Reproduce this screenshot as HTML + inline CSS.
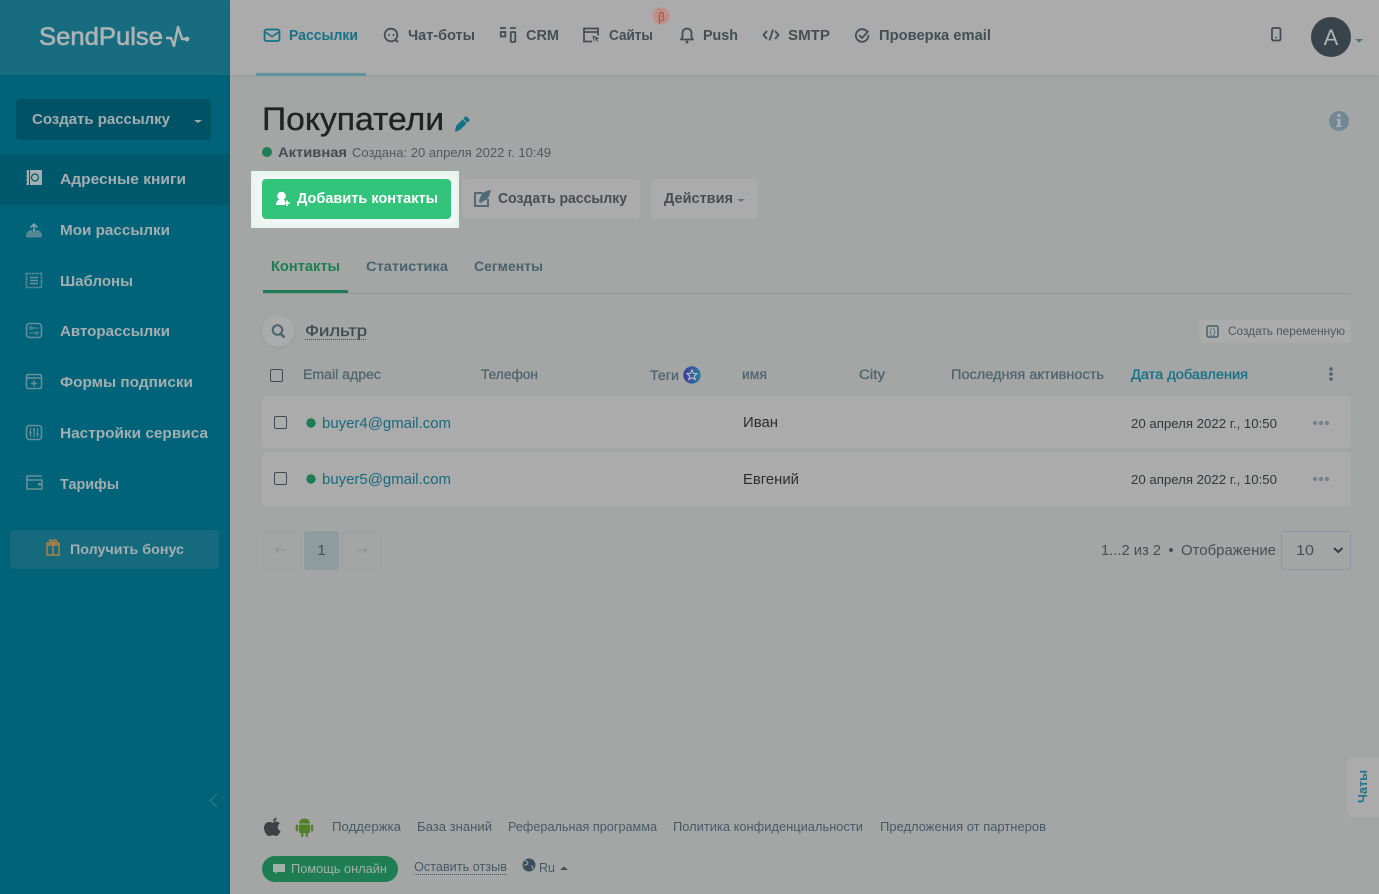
<!DOCTYPE html>
<html lang="ru"><head><meta charset="utf-8"><title>SendPulse</title>
<style>
html,body{margin:0;padding:0;width:1379px;height:894px;overflow:hidden;background:#a4a6a5}
body{position:relative;font-family:"Liberation Sans",sans-serif}
.b{position:absolute;box-sizing:border-box}
svg{position:absolute;left:0;top:0}
text{font-family:"Liberation Sans",sans-serif}
.n{font-weight:700;font-size:14.5px;fill:#454e53}
.m{font-weight:700;font-size:15px;fill:#a3aeb0}
.h{font-size:13.5px;fill:#4f6571;font-weight:400;stroke:#4f6571;stroke-width:.3px}
.f{font-size:12.5px;fill:#475966}
.d{font-size:13px;fill:#33383b}
.e{font-size:15px;fill:#156a7e}
.i1{fill:none;stroke:#659098;stroke-width:1.6}
.i2{fill:none;stroke:#434e54;stroke-width:1.8}
</style></head><body>
<div class="b" style="left:0;top:0;width:230px;height:894px;background:#00637a"></div>
<div class="b" style="left:0;top:0;width:230px;height:75px;background:#176c80"></div>
<div class="b" style="left:230px;top:0;width:1149px;height:75px;background:#ababab;box-shadow:0 1px 3px rgba(0,0,0,.06)"></div>
<div class="b" style="left:256px;top:73px;width:110px;height:3px;background:#5f949f"></div>
<div class="b" style="left:16px;top:99px;width:195px;height:41px;background:#005366;border-radius:4px"></div>
<div class="b" style="left:185px;top:99px;width:1px;height:41px;background:#004a59"></div>
<div class="b" style="left:0;top:154px;width:230px;height:51px;background:#00586c"></div>
<div class="b" style="left:10px;top:530px;width:209px;height:39px;background:#166a7e;border-radius:4px"></div>

<div class="b" style="left:251px;top:171px;width:208px;height:57px;background:#f3f8f6;box-shadow:inset 0 0 12px #dcefe6"></div>
<div class="b" style="left:262px;top:179px;width:189px;height:40px;background:#33c47c;border-radius:4px"></div>
<div class="b" style="left:462px;top:179px;width:178px;height:40px;background:#ababab;border-radius:4px"></div>
<div class="b" style="left:651px;top:179px;width:107px;height:40px;background:#ababab;border-radius:4px"></div>
<div class="b" style="left:263px;top:293px;width:1088px;height:1px;background:#8c9998"></div>
<div class="b" style="left:263px;top:290px;width:85px;height:3px;background:#1e7d53"></div>
<div class="b" style="left:262px;top:315px;width:32px;height:32px;border-radius:50%;background:#ababab;box-shadow:0 1px 3px rgba(0,0,0,.08)"></div>
<div class="b" style="left:1199px;top:320px;width:152px;height:23px;background:#ababab;border-radius:3px"></div>
<div class="b" style="left:262px;top:396px;width:1089px;height:52px;background:#ababab;border-radius:4px"></div>
<div class="b" style="left:262px;top:452px;width:1089px;height:55px;background:#ababab;border-radius:4px"></div>
<div class="b" style="left:270px;top:369px;width:13px;height:13px;border:1.4px solid #43494e;border-radius:2px"></div>
<div class="b" style="left:274px;top:416px;width:13px;height:13px;border:1.4px solid #43494e;border-radius:2px"></div>
<div class="b" style="left:274px;top:472px;width:13px;height:13px;border:1.4px solid #43494e;border-radius:2px"></div>
<div class="b" style="left:262px;top:531px;width:39px;height:39px;border:1px solid #9aa0a0;border-radius:3px"></div>
<div class="b" style="left:304px;top:531px;width:35px;height:39px;background:#8d9d9f;border-radius:3px"></div>
<div class="b" style="left:342px;top:531px;width:39px;height:39px;border:1px solid #9aa0a0;border-radius:3px"></div>
<div class="b" style="left:1281px;top:531px;width:70px;height:39px;border:1px solid #8a989b;border-radius:3px"></div>
<div class="b" style="left:262px;top:856px;width:136px;height:26px;background:#1e7d53;border-radius:13px"></div>
<div class="b" style="left:1347px;top:757px;width:32px;height:60px;background:#ababab;border-radius:6px 0 0 6px"></div>

<svg width="1379" height="894" viewBox="0 0 1379 894" xmlns="http://www.w3.org/2000/svg">
<defs><linearGradient id="g" x1="0" y1="0" x2="1" y2="0"><stop offset="0" stop-color="#433a9c"/><stop offset="1" stop-color="#267f9f"/></linearGradient></defs>

<!-- Logo -->
<text x="39" y="45" font-size="25" fill="#aeb3b4" stroke="#aeb3b4" stroke-width=".6" textLength="124" lengthAdjust="spacingAndGlyphs">SendPulse</text>
<path d="M166 38h5l3 8 4-19 4 12h5" fill="none" stroke="#aeb3b4" stroke-width="2.400" stroke-linejoin="round"/><circle cx="187" cy="39" r="2.400" fill="#aeb3b4"/>

<!-- Sidebar -->
<text x="32" y="124" class="m" textLength="138" lengthAdjust="spacingAndGlyphs">Создать рассылку</text>
<path d="M194 120h8l-4 3z" fill="#a3aeb0"/>
<rect x="27" y="170" width="15" height="15" fill="#a3aeb0"/><circle cx="35" cy="177.500" r="3.500" fill="none" stroke="#00586c" stroke-width="1.200"/><path d="M28 172h-2M28 176h-2M28 180h-2M28 184h-2" stroke="#a3aeb0"/><path d="M29.500 170v15" stroke="#00586c"/>
<text x="60" y="184" class="m" textLength="126" lengthAdjust="spacingAndGlyphs">Адресные книги</text>
<path d="M26 236c0-4 3-6 5-6h6c2 0 5 2 5 6 0 1-1 1.500-2 1.500H28c-1 0-2-.5-2-1.500z" fill="#568894"/><path d="M34 233v-8m-3.500 3.500L34 225l3.500 3.500" fill="none" stroke="#00637a" stroke-width="3"/><path d="M34 233v-9m-3.500 3.500L34 224l3.500 3.500" fill="none" stroke="#7fa2aa" stroke-width="1.600"/>
<text x="60" y="235" class="m" textLength="110" lengthAdjust="spacingAndGlyphs">Мои рассылки</text>
<rect x="26.500" y="273.500" width="15" height="14" class="i1" stroke-dasharray="2 .7"/><path d="M30 277.500h8M30 280.500h8M30 283.500h8" stroke="#659098" stroke-width="1.500"/>
<text x="60" y="286" class="m" textLength="73" lengthAdjust="spacingAndGlyphs">Шаблоны</text>
<rect x="26.500" y="323.500" width="15" height="14" rx="3" class="i1"/><circle cx="31" cy="328" r="1.300" fill="none" stroke="#659098"/><circle cx="37" cy="333" r="1.300" fill="none" stroke="#659098"/><path d="M32.500 328h6M29.500 333h6" stroke="#659098" stroke-width="1.100"/>
<text x="60" y="336" class="m" textLength="110" lengthAdjust="spacingAndGlyphs">Авторассылки</text>
<rect x="26.500" y="374.500" width="15" height="14" rx="2" class="i1"/><path d="M27 378h14M34 380.500v6M31 383.500h6" stroke="#659098" stroke-width="1.500"/>
<text x="60" y="387" class="m" textLength="133" lengthAdjust="spacingAndGlyphs">Формы подписки</text>
<rect x="26.500" y="425.500" width="15" height="14" rx="3" class="i1"/><path d="M30.500 428v9M34 428v9M37.500 428v9" stroke="#659098" stroke-width="1.200"/><path d="M29.500 433h2M33 430h2M36.500 434h2" stroke="#659098" stroke-width="1.800"/>
<text x="60" y="438" class="m" textLength="148" lengthAdjust="spacingAndGlyphs">Настройки сервиса</text>
<path d="M42 476H27v13h15v-9H27" class="i1"/><rect x="38" y="483" width="3" height="2.500" fill="#659098"/>
<text x="60" y="489" class="m" textLength="59" lengthAdjust="spacingAndGlyphs">Тарифы</text>
<path d="M47 545h12v10H47zM47 545v-2h12v2M53 543v12M53 543c-3 0-4-2-3-3 1-1 3 1 3 3 0-2 2-4 3-3 1 1 0 3-3 3" fill="none" stroke="#b38143" stroke-width="1.400"/>
<text x="70" y="554" font-weight="700" font-size="14" fill="#a3aeb0" textLength="114" lengthAdjust="spacingAndGlyphs">Получить бонус</text>
<path d="M217 794l-7 6.500 7 6.500" fill="none" stroke="#257083" stroke-width="1.800"/>

<!-- Top nav -->
<rect x="264.500" y="29.500" width="15" height="11.500" rx="2" fill="none" stroke="#157186" stroke-width="1.800"/><path d="M265 32l7 4.500 7-4.500" fill="none" stroke="#157186" stroke-width="1.600"/>
<text x="289" y="40" class="n" style="fill:#157186" textLength="69" lengthAdjust="spacingAndGlyphs">Рассылки</text>
<circle cx="391" cy="35" r="6.300" class="i2"/><path d="M395 39.500l3 2.500" class="i2"/><circle cx="389" cy="35" r="1" fill="#434e54"/><circle cx="393.500" cy="35" r="1" fill="#434e54"/>
<text x="408" y="40" class="n" textLength="67" lengthAdjust="spacingAndGlyphs">Чат-боты</text>
<path d="M500 28h6M510 28h6" stroke="#434e54" stroke-width="1.800"/><rect x="500.800" y="32" width="4.500" height="4.500" class="i2" stroke-width="1.500"/><rect x="510.800" y="32" width="4.500" height="10" rx="1" class="i2" stroke-width="1.500"/>
<text x="526" y="40" class="n" textLength="33" lengthAdjust="spacingAndGlyphs">CRM</text>
<path d="M592 41.500h-8v-13h14v7M584 32h14" class="i2"/><path d="M593 36l5 2.500-2 .8 2 2.200M593 36l1 5" fill="#434e54" stroke="#434e54" stroke-width="1"/>
<text x="609" y="40" class="n" textLength="44" lengthAdjust="spacingAndGlyphs">Сайты</text>
<circle cx="661" cy="16" r="8.500" fill="#c09087"/>
<text x="658" y="21" font-size="12" fill="#ab4836">β</text>
<path d="M681 39.500h12l-1.500-2.500v-4a4.500 4.500 0 0 0-9 0v4z" class="i2" stroke-linejoin="round"/><circle cx="687" cy="42" r="1.400" fill="#434e54"/>
<text x="703" y="40" class="n" textLength="35" lengthAdjust="spacingAndGlyphs">Push</text>
<path d="M767 31l-3.500 4 3.500 4M775 31l3.500 4-3.500 4M773 29.500l-3.500 11" class="i2" stroke-width="1.500"/>
<text x="788" y="40" class="n" textLength="42" lengthAdjust="spacingAndGlyphs">SMTP</text>
<path d="M867 31.500a6.300 6.300 0 1 0 1.400 3.500" class="i2"/><path d="M859 35l3 3 6.500-7" class="i2"/>
<text x="879" y="40" class="n" textLength="112" lengthAdjust="spacingAndGlyphs">Проверка email</text>
<rect x="1272" y="28" width="8.500" height="12.500" rx="1.500" class="i2" stroke="#38434b"/><circle cx="1276.200" cy="37.500" r=".9" fill="#38434b"/>
<circle cx="1331" cy="37" r="20" fill="#38434b"/>
<text x="1331" y="45" text-anchor="middle" font-size="22" fill="#aeb2b2">A</text>
<path d="M1355 39h8l-4 3.500z" fill="#457382"/>

<!-- Heading -->
<text x="262" y="130" font-size="32" fill="#222" textLength="182" lengthAdjust="spacingAndGlyphs" stroke="#222" stroke-width=".35">Покупатели</text>
<path d="M466 116l4 4-10 10-5 2 1-6z" fill="#157186"/><path d="M463 119l4 4" stroke="#a4a6a5"/>
<circle cx="1339" cy="121" r="10" fill="#728895"/><circle cx="1339" cy="115.500" r="1.800" fill="#aaafaf"/><path d="M1336.500 119h4v6.500h1.500v1.500h-6v-1.500h1.500v-5h-1z" fill="#aaafaf"/>
<circle cx="267" cy="152" r="5" fill="#1e7d53"/>
<text x="278" y="157" font-weight="700" font-size="14" fill="#434c51" textLength="69" lengthAdjust="spacingAndGlyphs">Активная</text>
<text x="352" y="157" font-size="13" fill="#50595f" textLength="199" lengthAdjust="spacingAndGlyphs">Создана: 20 апреля 2022 г. 10:49</text>

<!-- Buttons -->
<circle cx="281.500" cy="196" r="4.300" fill="#fff"/><path d="M276 205c0-4 2-5.500 5.500-5.500 1.500 0 2.500.3 3.300.8v4.700z" fill="#fff"/><path d="M287 200.500v5.500M284.300 203.200h5.500" stroke="#fff" stroke-width="1.600"/>
<text x="297" y="203" font-weight="700" font-size="14.500" fill="#fff" textLength="141" lengthAdjust="spacingAndGlyphs">Добавить контакты</text>
<path d="M488 199v7h-13v-13h8" fill="none" stroke="#516a77" stroke-width="2"/><path d="M491 190c-6 .5-11 4-12 12l2 1c1-1 2-2 5-3 3-2 4-6 5-10z" fill="#516a77"/>
<text x="498" y="203" class="n" textLength="129" lengthAdjust="spacingAndGlyphs">Создать рассылку</text>
<text x="664" y="203" class="n" textLength="69" lengthAdjust="spacingAndGlyphs">Действия</text>
<path d="M737 199h8l-4 3z" fill="#617c89"/>

<!-- Tabs -->
<text x="271" y="271" font-weight="700" font-size="14.500" fill="#1e7d53" textLength="69" lengthAdjust="spacingAndGlyphs">Контакты</text>
<text x="366" y="271" font-weight="700" font-size="14" fill="#47636f" textLength="82" lengthAdjust="spacingAndGlyphs">Статистика</text>
<text x="474" y="271" font-weight="700" font-size="14" fill="#47636f" textLength="69" lengthAdjust="spacingAndGlyphs">Сегменты</text>

<!-- Filter -->
<circle cx="277.500" cy="330" r="4.800" fill="none" stroke="#47636f" stroke-width="2"/><path d="M281 334l3.500 3.500" stroke="#47636f" stroke-width="2.400"/>
<text x="305" y="336" font-size="16" fill="#434c51" stroke="#434c51" stroke-width=".3" textLength="62" lengthAdjust="spacingAndGlyphs">Фильтр</text>
<path d="M305 339.500h62" stroke="#434c51" stroke-dasharray="1 1"/>
<rect x="1207" y="326" width="11" height="11" rx="1.500" fill="none" stroke="#47636f" stroke-width="1.500"/><text x="1209.500" y="334.500" font-size="8" fill="#47636f" textLength="6" lengthAdjust="spacing">{}</text>
<text x="1228" y="335" font-size="11.500" fill="#4e575c" textLength="117" lengthAdjust="spacingAndGlyphs">Создать переменную</text>

<!-- Table head -->
<text x="303" y="379" class="h" textLength="78" lengthAdjust="spacingAndGlyphs">Email адрес</text>
<text x="481" y="379" class="h" textLength="57" lengthAdjust="spacingAndGlyphs">Телефон</text>
<text x="650" y="380" class="h" textLength="29" lengthAdjust="spacingAndGlyphs">Теги</text>
<circle cx="692" cy="375" r="8.700" fill="url(#g)"/><path d="M692 370l1.500 3.400 3.500.3-2.700 2.300.9 3.500-3.200-1.900-3.200 1.900.9-3.500-2.700-2.300 3.500-.3z" fill="none" stroke="#bcc5ca" stroke-width="1.100"/>
<text x="742" y="379" class="h" textLength="25" lengthAdjust="spacingAndGlyphs">имя</text>
<text x="859" y="379" class="h" textLength="26" lengthAdjust="spacingAndGlyphs">City</text>
<text x="951" y="379" class="h" textLength="153" lengthAdjust="spacingAndGlyphs">Последняя активность</text>
<text x="1131" y="379" class="h" style="fill:#157186;stroke:#157186" textLength="117" lengthAdjust="spacingAndGlyphs">Дата добавления</text>
<circle cx="1331" cy="369" r="1.800" fill="#4f6571"/><circle cx="1331" cy="374" r="1.800" fill="#4f6571"/><circle cx="1331" cy="379" r="1.800" fill="#4f6571"/>

<!-- Rows -->
<circle cx="311" cy="423" r="4.700" fill="#1e7d53"/>
<text x="322" y="428" class="e" textLength="129" lengthAdjust="spacingAndGlyphs">buyer4@gmail.com</text>
<text x="743" y="427" font-size="14.500" fill="#2d2d2d" textLength="35" lengthAdjust="spacingAndGlyphs">Иван</text>
<text x="1131" y="428" class="d" textLength="146" lengthAdjust="spacingAndGlyphs">20 апреля 2022 г., 10:50</text>
<g fill="#71848e"><circle cx="1315" cy="423" r="2.200"/><circle cx="1321" cy="423" r="2.200"/><circle cx="1327" cy="423" r="2.200"/></g>
<circle cx="311" cy="479" r="4.700" fill="#1e7d53"/>
<text x="322" y="484" class="e" textLength="129" lengthAdjust="spacingAndGlyphs">buyer5@gmail.com</text>
<text x="743" y="484" font-size="14.500" fill="#2d2d2d" textLength="56" lengthAdjust="spacingAndGlyphs">Евгений</text>
<text x="1131" y="484" class="d" textLength="146" lengthAdjust="spacingAndGlyphs">20 апреля 2022 г., 10:50</text>
<g fill="#71848e"><circle cx="1315" cy="479" r="2.200"/><circle cx="1321" cy="479" r="2.200"/><circle cx="1327" cy="479" r="2.200"/></g>

<!-- Pagination -->
<path d="M286 550h-10m3-2.500l-3 2.500 3 2.500M357 550h10m-3-2.500l3 2.500-3 2.500" fill="none" stroke="#889192" stroke-width="1"/>
<text x="321.500" y="555" text-anchor="middle" font-size="15" fill="#484f53">1</text>
<text x="1101" y="555" font-size="15" fill="#484f53" textLength="60" lengthAdjust="spacingAndGlyphs">1...2 из 2</text>
<circle cx="1171" cy="550" r="2" fill="#484f53"/>
<text x="1181" y="555" font-size="15" fill="#484f53" textLength="95" lengthAdjust="spacingAndGlyphs">Отображение</text>
<text x="1296" y="555" font-size="15" fill="#484f53" textLength="18" lengthAdjust="spacingAndGlyphs">10</text>
<path d="M1334 548l4.200 4 4.200-4" fill="none" stroke="#373e41" stroke-width="2"/>

<!-- Footer -->
<path d="M273 823c-2-1-3-1-4-1-3 0-5 3-5 6 0 4 3 8 5 8 1.200 0 2-.7 3.700-.7s2.300.7 3.500.7c2 0 3.800-3.300 4.300-5-1.700-.7-2.700-2-2.700-4 0-1.500.8-2.700 2-3.500-1-1.300-2.500-2-3.800-2-1.300 0-2.500.8-3.500 1.500z M273 821.500c0-2 1.500-3.500 3.500-4 .2 2.200-1.500 4-3.500 4z" fill="#3d4143"/>
<path d="M299 823.500a5.500 5 0 0 1 11 0z" fill="#518027"/><rect x="299" y="824.500" width="11" height="8.500" rx="1" fill="#518027"/><rect x="295.700" y="824.500" width="2.500" height="7" rx="1.200" fill="#518027"/><rect x="310.800" y="824.500" width="2.500" height="7" rx="1.200" fill="#518027"/><rect x="301" y="832" width="2.500" height="5" rx="1.200" fill="#518027"/><rect x="305.500" y="832" width="2.500" height="5" rx="1.200" fill="#518027"/><path d="M301 819l1 1.500M308 819l-1 1.500" stroke="#518027"/>
<text x="332" y="831" class="f" textLength="69" lengthAdjust="spacingAndGlyphs">Поддержка</text>
<text x="417" y="831" class="f" textLength="75" lengthAdjust="spacingAndGlyphs">База знаний</text>
<text x="508" y="831" class="f" textLength="149" lengthAdjust="spacingAndGlyphs">Реферальная программа</text>
<text x="673" y="831" class="f" textLength="190" lengthAdjust="spacingAndGlyphs">Политика конфиденциальности</text>
<text x="880" y="831" class="f" textLength="166" lengthAdjust="spacingAndGlyphs">Предложения от партнеров</text>
<path d="M273 864h12v8h-8l-2 2v-2h-2z" fill="#a3b1ab"/>
<text x="291" y="873" font-size="13" fill="#a3b1ab" textLength="96" lengthAdjust="spacingAndGlyphs">Помощь онлайн</text>
<text x="414" y="871" font-size="12.500" fill="#475966" textLength="93" lengthAdjust="spacingAndGlyphs">Оставить отзыв</text>
<path d="M414 874.500h93" stroke="#475966" stroke-dasharray="1 1"/>
<circle cx="529" cy="865" r="6.500" fill="#38505e"/><path d="M525 860.500c2 .5 3.500 1.500 2.500 3.500-1 1-2.500.5-3.500 1.500M531 866c2 0 2.500 1.500 1.500 3.500" fill="none" stroke="#a4a6a5"/>
<text x="539" y="872" font-size="12.500" fill="#475966" textLength="16" lengthAdjust="spacingAndGlyphs">Ru</text>
<path d="M560 870h8l-4-3.500z" fill="#38505e"/>

<!-- Chat tab -->
<text transform="translate(1367 803) rotate(-90)" font-size="13" font-weight="700" fill="#25758b" textLength="33" lengthAdjust="spacingAndGlyphs">Чаты</text>
</svg>
</body></html>
